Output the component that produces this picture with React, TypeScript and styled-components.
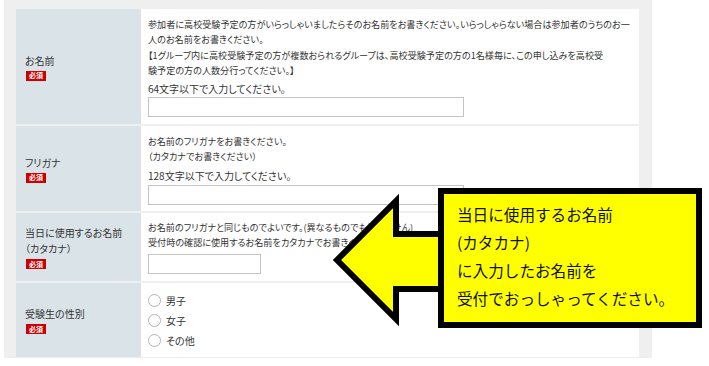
import React from "react";
import styled, { createGlobalStyle } from "styled-components";

const GlobalStyle = createGlobalStyle`
  html, body {
    margin: 0;
    padding: 0;
    background: #fff;
  }
  body {
    font-family: "Noto Sans CJK JP", "Noto Sans", sans-serif;
    color: #333;
  }
`;

const Page = styled.div`
  position: relative;
  width: 709px;
  height: 366px;
  overflow: hidden;
`;

const Frame = styled.div`
  margin-left: 4px;
  width: 648px;
  box-sizing: border-box;
  background: #efefef;
  padding: 9px 13px 1px 12px;
`;

const Table = styled.div`
  display: flex;
  flex-direction: column;
  gap: 2px;
`;

const Row = styled.div<{ $h: number }>`
  display: grid;
  grid-template-columns: 125px minmax(0, 1fr);
  height: ${(p) => p.$h}px;
`;

const Label = styled.div`
  background: #dae3e8;
  padding-left: 9px;
  display: flex;
  flex-direction: column;
  justify-content: center;
  align-items: flex-start;
  font-size: 10px;
  line-height: 16px;
  color: #333;
  font-feature-settings: "palt";
`;

const Required = styled.span`
  display: flex;
  align-items: center;
  justify-content: center;
  width: 20px;
  height: 10px;
  margin: 2px 0 0 1px;
  background: #cc0000;
  color: #fff;
  font-size: 7px;
  font-weight: bold;
  line-height: 1;
`;

const Content = styled.div<{ $pt: number }>`
  min-width: 0;
  background: #fff;
  padding: ${(p) => p.$pt}px 2px 0 7px;
  font-feature-settings: "palt";
`;

const Line = styled.div`
  font-size: 9.1px;
  line-height: 15.3px;
  white-space: nowrap;
`;

const Note = styled.div`
  margin-top: 3px;
  font-size: 10px;
  line-height: 15px;
  white-space: nowrap;
`;

const TextBox = styled.div<{ $w: number; $mt: number }>`
  width: ${(p) => p.$w}px;
  height: 20px;
  margin-top: ${(p) => p.$mt}px;
  box-sizing: border-box;
  border: 1px solid #c4c4c4;
  background: #fff;
`;

const Radio = styled.label`
  display: flex;
  align-items: center;
  gap: 5px;
  height: 20px;
  font-size: 10px;
  color: #333;
`;

const Circle = styled.span`
  width: 13px;
  height: 13px;
  box-sizing: border-box;
  border: 1px solid #b3b3b3;
  border-radius: 50%;
  background: #fff;
`;

const Callout = styled.div`
  position: absolute;
  left: 328px;
  top: 188px;
  display: flex;
  align-items: flex-start;
`;

const Bubble = styled.div`
  position: relative;
  margin-left: -8px;
  width: 264px;
  height: 140px;
  box-sizing: border-box;
  border: 6px solid #000;
  background: #ffff00;
  padding: 6px 0 0 13px;
  font-size: 15.6px;
  line-height: 28px;
  color: #111;
  white-space: nowrap;
`;

const rows = [
  {
    label: ["お名前"],
    h: 115,
    pt: 8,
    lines: [
      "参加者に高校受験予定の方がいらっしゃいましたらそのお名前をお書きください。いらっしゃらない場合は参加者のうちのお一",
      "人のお名前をお書きください。",
      "【1グループ内に高校受験予定の方が複数おられるグループは、高校受験予定の方の1名様毎に、この申し込みを高校受",
      "験予定の方の人数分行ってください。】",
    ],
    note: "64文字以下で入力してください。",
    input: { w: 316, mt: 1 },
  },
  {
    label: ["フリガナ"],
    h: 85,
    pt: 8,
    lines: ["お名前のフリガナをお書きください。", "（カタカナでお書きください）"],
    note: "128文字以下で入力してください。",
    input: { w: 316, mt: 2 },
  },
  {
    label: ["当日に使用するお名前", "（カタカナ）"],
    h: 68,
    pt: 6.5,
    lines: [
      "お名前のフリガナと同じものでよいです。(異なるものでも構いません)",
      "受付時の確認に使用するお名前をカタカナでお書きください。",
    ],
    note: "",
    input: { w: 113, mt: 3.5 },
  },
];

export default function App() {
  return (
    <Page>
      <GlobalStyle />
      <Frame>
        <Table>
          {rows.map((r) => (
            <Row key={r.label[0]} $h={r.h}>
              <Label>
                {r.label.map((t) => (
                  <div key={t}>{t}</div>
                ))}
                <Required>必須</Required>
              </Label>
              <Content $pt={r.pt}>
                {r.lines.map((t) => (
                  <Line key={t}>{t}</Line>
                ))}
                {r.note && <Note>{r.note}</Note>}
                <TextBox $w={r.input.w} $mt={r.input.mt} />
              </Content>
            </Row>
          ))}
          <Row $h={74}>
            <Label>
              <div>受験生の性別</div>
              <Required>必須</Required>
            </Label>
            <Content $pt={7}>
              {["男子", "女子", "その他"].map((t) => (
                <Radio key={t}>
                  <Circle />
                  {t}
                </Radio>
              ))}
            </Content>
          </Row>
        </Table>
      </Frame>

      <Callout>
        <svg width="118" height="140" viewBox="0 0 118 140">
          <polygon
            points="9,72 68,13 68,46 118,46 118,101 68,101 68,131"
            fill="#ffff00"
            stroke="#000"
            strokeWidth="6"
            strokeLinejoin="miter"
          />
        </svg>
        <Bubble>
          <div>当日に使用するお名前</div>
          <div>(カタカナ)</div>
          <div>に入力したお名前を</div>
          <div>受付でおっしゃってください。</div>
        </Bubble>
      </Callout>
    </Page>
  );
}
